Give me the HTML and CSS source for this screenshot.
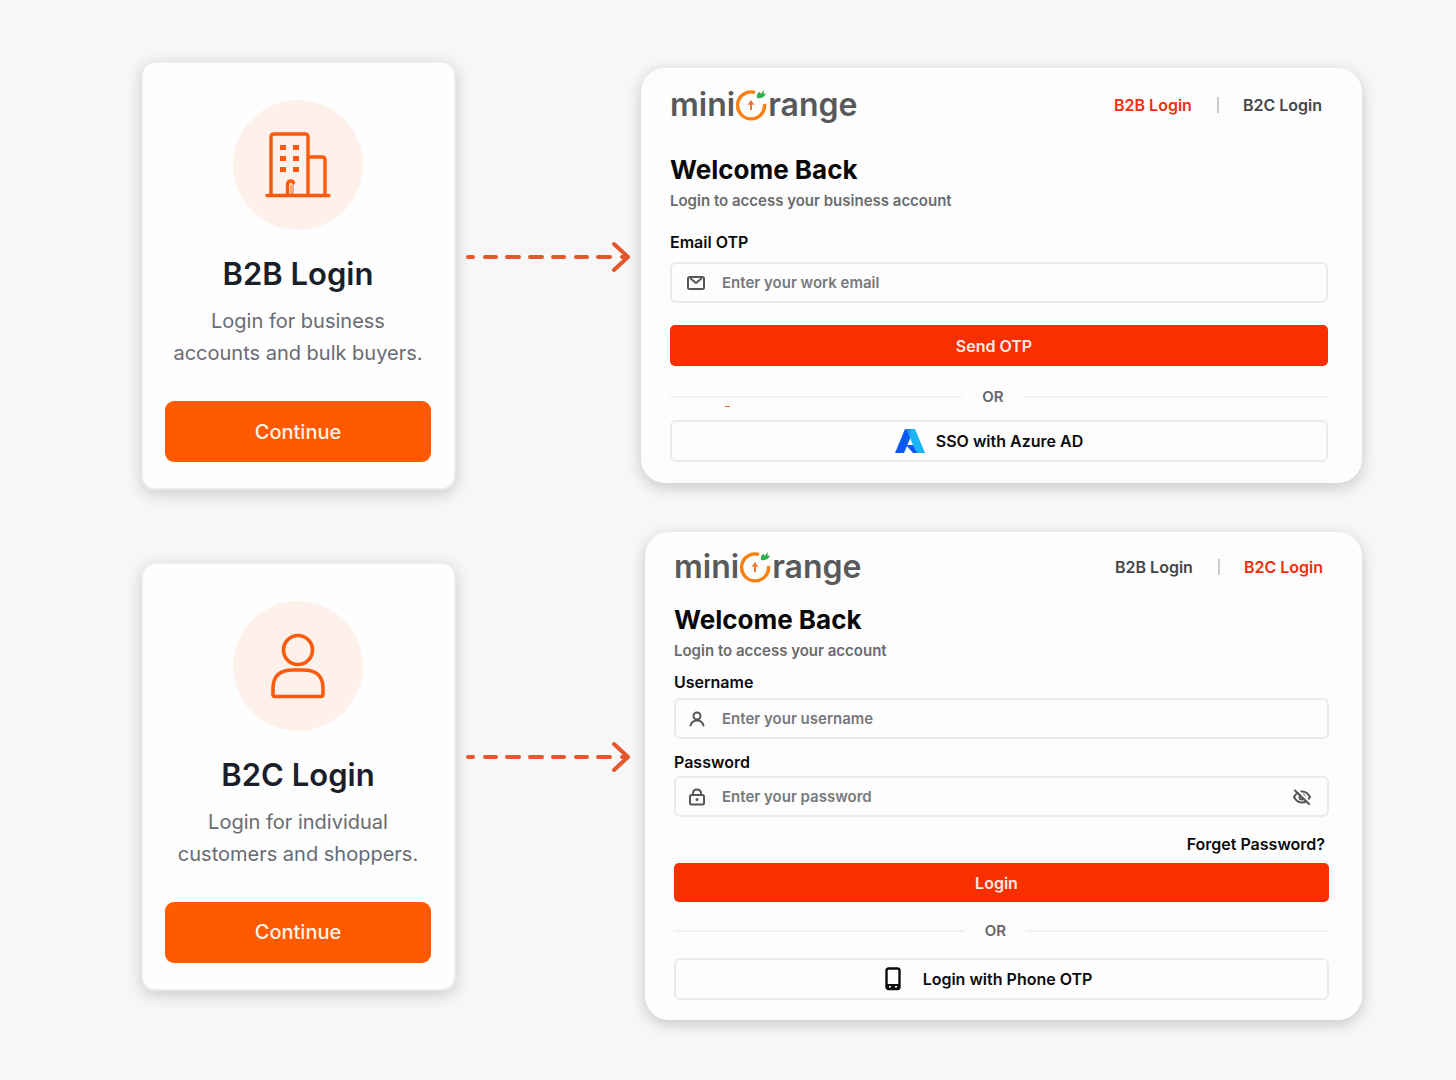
FILE: index.html
```html
<!DOCTYPE html>
<html lang="en">
<head>
    <meta charset="UTF-8">
    <meta name="viewport" content="width=device-width, initial-scale=1.0">
    <title>B2B and B2C Login</title>
    <link rel="stylesheet" href="styles.css">
</head>
<body>
    <main class="flows">
        <section class="flow flow-b2b">
            <div class="card">
                <div class="card-icon">
                    <svg width="66" height="66" viewBox="0 0 66 66" fill="none" stroke="#fa5a0c" stroke-width="3.4" stroke-linecap="round" stroke-linejoin="round">
                        <path d="M25 53h4v10h-4z" fill="#fba878" stroke="none"/>
                        <path d="M6 63V5q0-3 3-3h31q3 0 3 3v58M43 25h14q3 0 3 3v35M2 63.500h62M22.500 63V53q0-4 3.500-4 2 0 2.500 2"/>
                        <path d="M15 13h6v5h-6zM28 13h6v5h-6zM15 24h6v5h-6zM28 24h6v5h-6zM15 35h6v5h-6zM28 35h6v5h-6z" fill="#fa5a0c" stroke="none"/>
                    </svg>
                </div>
                <h2>B2B Login</h2>
                <p>Login for business<br>accounts and bulk buyers.</p>
                <button type="button" class="continue">Continue</button>
            </div>

            <svg class="arrow" width="166" height="32" viewBox="0 0 166 32" fill="none" stroke="#e5562c" stroke-width="4" stroke-linecap="round" stroke-linejoin="round">
                <path d="M3 16h5M20 16h11M42 16h12M65 16h12M88 16h11M111 16h11M133 16h12M157 16h5"/>
                <path d="M149 3l14 13-14 13"/>
            </svg>

            <form class="login">
                <header>
                    <div class="logo">
                        <span>mini</span>
                        <svg width="33" height="34" viewBox="0 0 33 34" fill="none">
                            <path d="M20 4.500A13.500 13.500 0 1 0 29.500 16" stroke="#f98012" stroke-width="3.400"/>
                            <path d="M16 12l-3.500 5 2.500-.500V22h2v-5.500l2.500.5z" fill="#ee7430"/>
                            <path d="M22 10q-1-5 3-6l.5 2L29 2l-.5 4 2.500-.500Q29 11 22 10z" fill="#2bb24c"/>
                        </svg>
                        <span>range</span>
                    </div>
                    <nav>
                        <a href="#b2b" class="active">B2B Login</a>
                        <a href="#b2c">B2C Login</a>
                    </nav>
                </header>
                <h1>Welcome Back</h1>
                <p class="subtitle">Login to access your business account</p>

                <label for="email">Email OTP</label>
                <div class="field">
                    <svg width="18" height="14" viewBox="0 0 18 14" fill="none" stroke="#55565a" stroke-width="2" stroke-linejoin="round">
                        <rect x="1" y="1" width="16" height="12" rx="1.500"/>
                        <path d="M3 2l6 5 6-5"/>
                    </svg>
                    <input type="email" id="email" placeholder="Enter your work email">
                </div>

                <button type="button" class="submit">Send OTP</button>
                <div class="divider mark"><span>OR</span></div>
                <button type="button" class="alternative">
                    <svg width="30" height="24" viewBox="0 0 30 24">
                        <path d="M10 0h9L9 24H0z" fill="#0a58f5"/>
                        <path d="M11 0h9l10 24h-9L14 6z" fill="#19b5f5"/>
                        <path d="M11 0h5l-2 6 2 5z" fill="#1b8cf0"/>
                        <path d="M11 16h7l4 8h-4z" fill="#0a58f5"/>
                    </svg>
                    SSO with Azure AD
                </button>
            </form>
        </section>

        <section class="flow flow-b2c">
            <div class="card">
                <div class="card-icon">
                    <svg width="54" height="66" viewBox="0 0 54 66" fill="none" stroke="#fa5a0c" stroke-width="3.600" stroke-linejoin="round">
                        <circle cx="27" cy="17" r="14.500"/>
                        <path d="M2 61V55Q2 37 22 37H32Q52 37 52 55V61Q52 63.500 50 63.500H4Q2 63.500 2 61z"/>
                    </svg>
                </div>
                <h2>B2C Login</h2>
                <p>Login for individual<br>customers and shoppers.</p>
                <button type="button" class="continue">Continue</button>
            </div>

            <svg class="arrow" width="166" height="32" viewBox="0 0 166 32" fill="none" stroke="#e5562c" stroke-width="4" stroke-linecap="round" stroke-linejoin="round">
                <path d="M3 16h5M20 16h11M42 16h12M65 16h12M88 16h11M111 16h11M133 16h12M157 16h5"/>
                <path d="M149 3l14 13-14 13"/>
            </svg>

            <form class="login">
                <header>
                    <div class="logo">
                        <span>mini</span>
                        <svg width="33" height="34" viewBox="0 0 33 34" fill="none">
                            <path d="M20 4.500A13.500 13.500 0 1 0 29.500 16" stroke="#f98012" stroke-width="3.400"/>
                            <path d="M16 12l-3.500 5 2.500-.500V22h2v-5.500l2.500.5z" fill="#ee7430"/>
                            <path d="M22 10q-1-5 3-6l.5 2L29 2l-.5 4 2.500-.500Q29 11 22 10z" fill="#2bb24c"/>
                        </svg>
                        <span>range</span>
                    </div>
                    <nav>
                        <a href="#b2b">B2B Login</a>
                        <a href="#b2c" class="active">B2C Login</a>
                    </nav>
                </header>
                <h1>Welcome Back</h1>
                <p class="subtitle">Login to access your account</p>

                <label for="username">Username</label>
                <div class="field">
                    <svg width="18" height="16" viewBox="0 0 18 16" fill="none" stroke="#55565a" stroke-width="2" stroke-linecap="round">
                        <circle cx="9" cy="5" r="3.500"/>
                        <path d="M2.500 14.500Q4 9.500 9 9.500T15.500 14.500"/>
                    </svg>
                    <input type="text" id="username" placeholder="Enter your username">
                </div>

                <label for="password">Password</label>
                <div class="field">
                    <svg width="18" height="18" viewBox="0 0 18 18" fill="none" stroke="#55565a" stroke-width="2" stroke-linejoin="round">
                        <rect x="2" y="7" width="14" height="9.500" rx="1.500"/>
                        <path d="M5 7V5.500Q5 1.500 9 1.500T13 5.500V7"/>
                        <circle cx="9" cy="11.500" r="1.500" fill="#55565a" stroke="none"/>
                    </svg>
                    <input type="password" id="password" placeholder="Enter your password">
                    <button type="button" class="toggle" aria-label="Show password">
                        <svg width="20" height="16" viewBox="0 0 20 16" fill="none" stroke="#55565a" stroke-width="2" stroke-linecap="round">
                            <path d="M2 8Q5 2.500 10 2.500T18 8Q15 13.500 10 13.500T2 8z"/>
                            <circle cx="10" cy="8" r="2.500"/>
                            <path d="M5 .5l13 13" stroke="#fff"/>
                            <path d="M3 1.500l14 13.500"/>
                        </svg>
                    </button>
                </div>

                <a href="#forget" class="forget">Forget Password?</a>
                <button type="button" class="submit">Login</button>
                <div class="divider"><span>OR</span></div>
                <button type="button" class="alternative phone">
                    <svg width="16" height="24" viewBox="0 0 16 24">
                        <rect x="1.500" y="1.500" width="13" height="20.500" rx="2" fill="none" stroke="#0c0c0e" stroke-width="2.400"/>
                        <path d="M2 17h12v5H2z" fill="#0c0c0e"/>
                        <path d="M4 19h2v1.500H4zM10 19h2v1.500h-2z" fill="#fff"/>
                    </svg>
                    Login with Phone OTP
                </button>
            </form>
        </section>
    </main>
</body>
</html>
```
FILE: styles.css
```css
* {
    box-sizing: border-box;
}

body {
    margin: 0;
    background: #f7f7f7;
    font-family: Inter, "Liberation Sans", sans-serif;
}

h1, h2, p {
    margin: 0;
}

a {
    color: inherit;
    text-decoration: none;
}

button, input {
    font-family: inherit;
}

button {
    cursor: pointer;
}

.flows {
    display: grid;
    gap: 42px;
    padding: 61px 94px 60px 141px;
}

.flow {
    display: grid;
    grid-template-columns: 315px 185px 1fr;
    align-items: center;
}

.flow-b2c {
    grid-template-columns: 315px 189px 1fr;
}

.card {
    padding: 37px 23px 26px 22px;
    text-align: center;
    background: #fefefe;
    border: 2px solid #ebebeb;
    border-radius: 14px;
    box-shadow: 0 4px 16px rgba(0, 0, 0, 0.18);
}

.card-icon {
    display: flex;
    align-items: center;
    justify-content: center;
    width: 130px;
    height: 130px;
    margin: 0 auto 24px;
    border-radius: 50%;
    background: #fef0ea;
}

.card h2 {
    font-size: 31px;
    line-height: 40px;
    font-weight: 600;
    color: #1b1f2a;
}

.card p {
    margin: 11px 0 32px;
    font-size: 20px;
    line-height: 32px;
    color: #686b73;
}

.continue {
    width: 100%;
    height: 61px;
    border: none;
    border-radius: 9px;
    background: #ff5a00;
    color: #fff3ea;
    font-size: 20px;
    font-weight: 500;
}

.arrow {
    margin: 0 0 38px 9px;
}

.login {
    display: flex;
    flex-direction: column;
    padding: 16px 34px 21px 29px;
    background: #fdfdfd;
    border-radius: 24px;
    box-shadow: 0 4px 16px rgba(0, 0, 0, 0.2);
}

.login header {
    display: flex;
    align-items: center;
    justify-content: space-between;
    height: 42px;
    margin-bottom: 26px;
}

.logo {
    display: flex;
    align-items: center;
    font-size: 32px;
    line-height: 40px;
    font-weight: 600;
    color: #58595b;
}

.login nav {
    display: flex;
    margin-right: 6px;
    font-size: 16px;
    line-height: 20px;
    font-weight: 600;
    color: #44464a;
}

.login nav a + a {
    margin-left: 25px;
    padding-left: 26px;
    background: linear-gradient(#ccc, #ccc) left center / 2px 16px no-repeat;
}

.login nav .active {
    color: #f52e0a;
}

.login h1 {
    font-size: 26px;
    line-height: 36px;
    font-weight: 700;
    color: #08080a;
}

.subtitle {
    margin: 3px 0 21px;
    font-size: 15px;
    line-height: 20px;
    font-weight: 600;
    color: #6a6b6f;
}

.login label,
.forget {
    font-size: 16px;
    line-height: 20px;
    font-weight: 600;
    color: #0c0c0e;
}

.login label {
    margin-bottom: 10px;
}

.field {
    display: flex;
    align-items: center;
    gap: 17px;
    height: 41px;
    padding: 0 15px;
    border: 2px solid #ebebec;
    border-radius: 6px;
}

.field input {
    flex: 1;
    min-width: 0;
    padding: 0;
    border: none;
    outline: none;
    background: none;
    font-size: 15px;
    font-weight: 600;
    color: #333;
}

.field input::placeholder {
    color: #77787c;
}

.toggle {
    display: flex;
    padding: 0;
    border: none;
    background: none;
}

.submit {
    height: 41px;
    margin-top: 22px;
    padding: 0 10px 0 0;
    border: none;
    border-radius: 5px;
    background: #fa2f00;
    color: #ffe9e2;
    font-size: 16px;
    font-weight: 600;
}

.divider {
    position: relative;
    display: flex;
    align-items: center;
    gap: 20px;
    margin: 21px 0 13px;
    font-size: 15px;
    line-height: 20px;
    font-weight: 600;
    color: #66676b;
}

.divider::before,
.divider::after {
    content: "";
    flex: 1;
    height: 2px;
    background: #f1f1f2;
}

.divider::after {
    flex-basis: 12px;
}

/* small red tick under the left line */
.mark span::before {
    content: "";
    position: absolute;
    left: 55px;
    bottom: 0;
    width: 5px;
    height: 1px;
    background: #f0603c;
}

.alternative {
    display: flex;
    align-items: center;
    justify-content: center;
    gap: 11px;
    height: 42px;
    padding: 0 20px 0 0;
    border: 2px solid #ebebec;
    border-radius: 6px;
    background: none;
    color: #0c0c0e;
    font-size: 16px;
    font-weight: 600;
}

.phone {
    gap: 22px;
    padding-right: 26px;
}

/* the B2C form is packed tighter than the B2B one */
.flow-b2c .login {
    padding: 14px 33px 20px 29px;
}

.flow-b2c header {
    margin-bottom: 14px;
}

.flow-b2c .subtitle {
    margin-bottom: 11px;
}

.flow-b2c label {
    margin-bottom: 6px;
}

.flow-b2c .field {
    padding-left: 12px;
    gap: 16px;
}

.flow-b2c .field + label {
    margin-top: 13px;
    margin-bottom: 4px;
}

.forget {
    align-self: flex-end;
    margin: 17px 4px 0 0;
}

.flow-b2c .submit {
    height: 39px;
    margin-top: 9px;
}

.flow-b2c .divider {
    margin: 19px 0 17px;
}
```
